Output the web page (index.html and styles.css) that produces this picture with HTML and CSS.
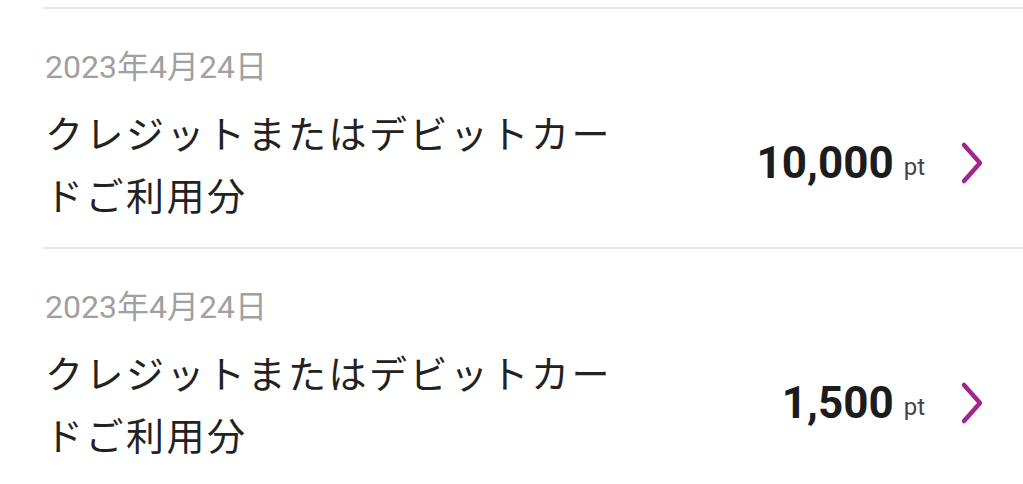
FILE: index.html
```html
<!DOCTYPE html>
<html lang="ja">
<head>
  <meta charset="UTF-8" />
  <meta name="viewport" content="width=device-width, initial-scale=1.0"/>
  <title>ポイント履歴</title>
  <link rel="stylesheet" href="styles.css">
</head>
<body>
  <div class="history-list">
    <div class="list-top"></div>

    <div class="history-item">
      <div class="item-date">2023年4月24日</div>
      <div class="item-row">
        <div class="item-title">クレジットまたはデビットカードご利用分</div>
        <div class="item-amount">
          <span class="amount-value">10,000</span>
          <span class="amount-unit">pt</span>
          <svg class="chevron" viewBox="0 0 26 46" width="26" height="46">
            <polyline points="5,5 21,23 5,41" />
          </svg>
        </div>
      </div>
    </div>

    <div class="history-item">
      <div class="item-date">2023年4月24日</div>
      <div class="item-row">
        <div class="item-title">クレジットまたはデビットカードご利用分</div>
        <div class="item-amount">
          <span class="amount-value">1,500</span>
          <span class="amount-unit">pt</span>
          <svg class="chevron" viewBox="0 0 26 46" width="26" height="46">
            <polyline points="5,5 21,23 5,41" />
          </svg>
        </div>
      </div>
    </div>
  </div>
</body>
</html>
```

FILE: styles.css
```css
body {
  margin: 0;
  background: #ffffff;
  font-family: Roboto, "Noto Sans CJK JP", sans-serif;
  overflow: hidden;
}

.history-list {
  margin-left: 43px;
}

.list-top {
  height: 7px;
}

.history-item {
  border-top: 2px solid #e6e6e6;
  padding: 38px 38px 22px 2px;
  height: 240px;
  box-sizing: border-box;
}

.item-date {
  font-family: Roboto, "Noto Sans CJK JP", sans-serif;
  font-size: 32px;
  line-height: 40px;
  color: #a0a0a0;
}

.item-row {
  display: flex;
  align-items: center;
  margin-top: 14px;
}

.item-title {
  width: 585px;
  font-family: "Noto Sans CJK JP", sans-serif;
  font-size: 38px;
  line-height: 62px;
  letter-spacing: 2.5px;
  color: #222222;
  word-break: break-all;
}

.item-amount {
  margin-left: auto;
  display: flex;
  align-items: center;
}

.amount-value {
  font-size: 44px;
  font-weight: 700;
  color: #1c1c1c;
}

.amount-unit {
  font-size: 24px;
  color: #444444;
  margin-left: 10px;
  padding-top: 8px;
}

.chevron {
  margin-left: 34px;
  fill: none;
  stroke: #a1268f;
  stroke-width: 4.5;
  stroke-linecap: round;
  stroke-linejoin: round;
}
```
